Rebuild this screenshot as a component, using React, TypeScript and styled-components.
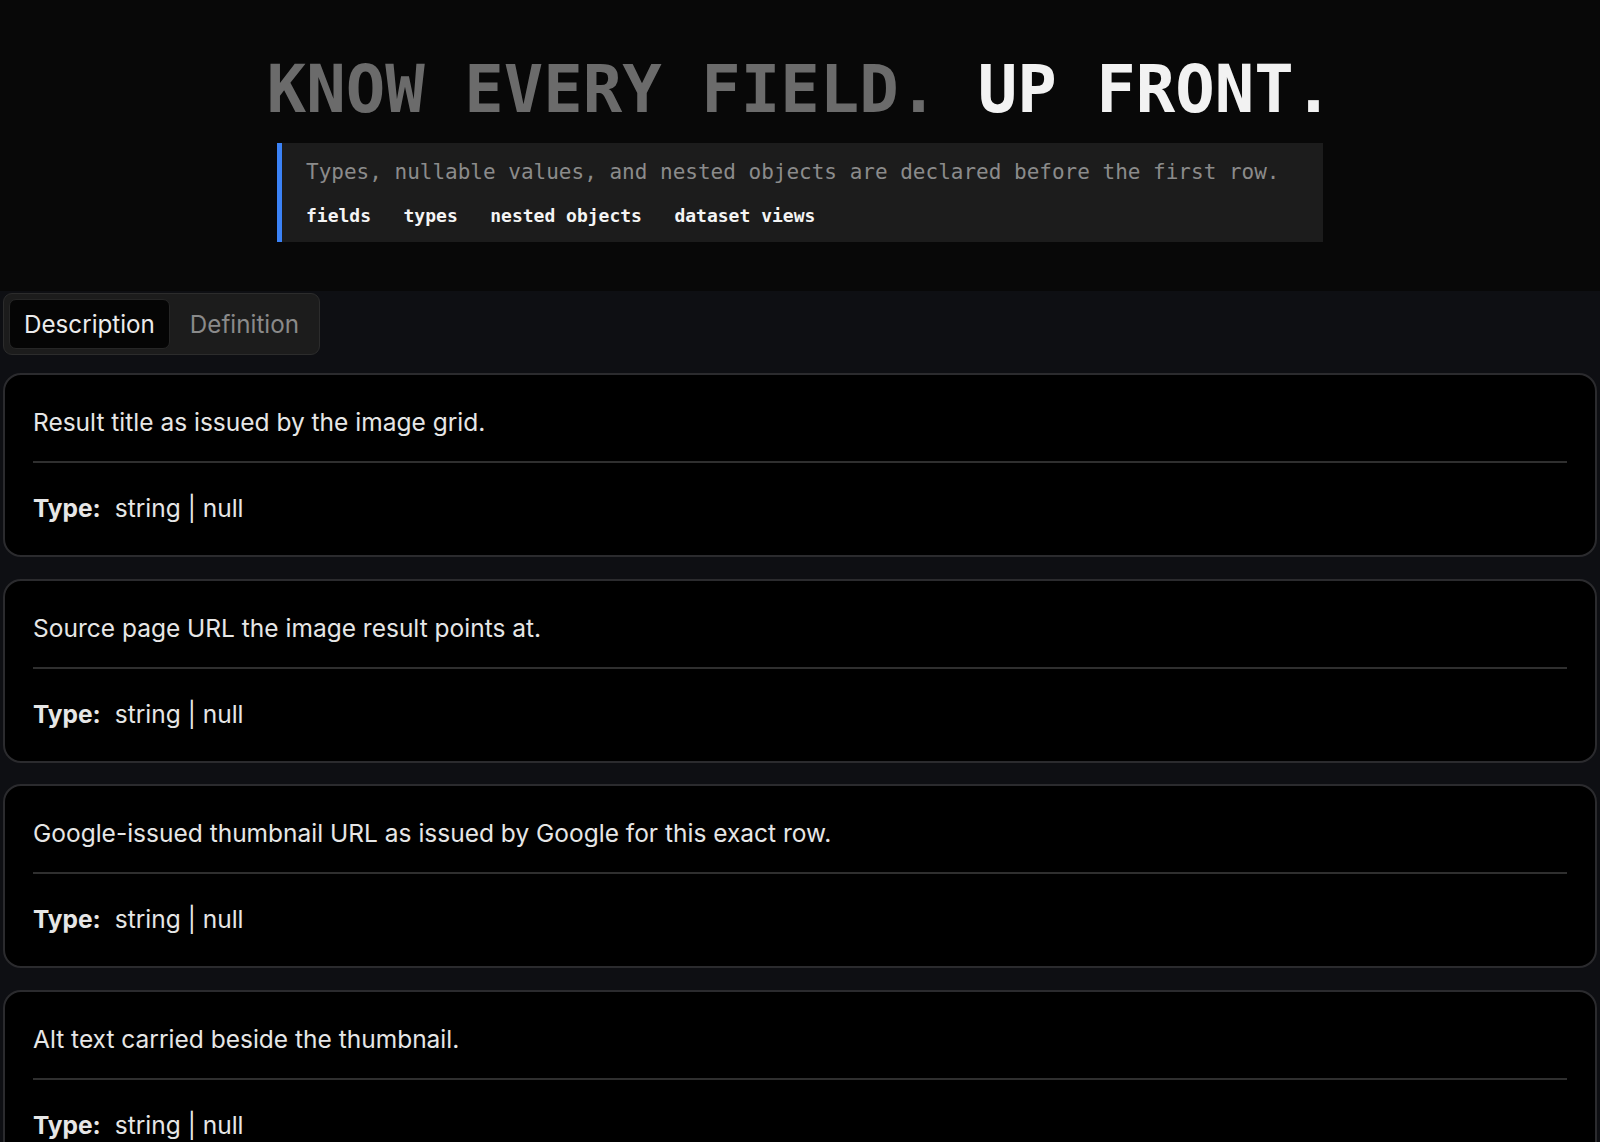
import * as React from "react";
import styled, { createGlobalStyle } from "styled-components";

const GlobalStyle = createGlobalStyle`
  html, body {
    margin: 0;
    padding: 0;
    background: #0e0f13;
  }
  * {
    box-sizing: border-box;
  }
`

const Hero = styled.header`
  background: #080808;
  padding: 54px 0 49px;
  text-align: center;
`

const Title = styled.h1`
  margin: 0;
  font-family: "DejaVu Sans Mono", "Liberation Mono", monospace;
  font-weight: 700;
  font-size: 65.6px;
  line-height: 71px;
  color: #6b6b6b;
  white-space: nowrap;
`

const Bright = styled.span`
  color: #f2f2f2;
`

const Callout = styled.div`
  width: 1046px;
  margin: 18px auto 0;
  padding: 12px 22px 14px 24px;
  background: #1c1c1c;
  border-left: 5px solid #3b82f6;
  text-align: left;
  font-family: "DejaVu Sans Mono", "Liberation Mono", monospace;
`

const Lead = styled.p`
  margin: 0;
  font-size: 21px;
  line-height: 34px;
  color: #8b8b8b;
  white-space: nowrap;
`

const TagRow = styled.div`
  display: flex;
  gap: 32.5px;
  margin-top: 14px;
`

const Tag = styled.span`
  font-size: 18px;
  line-height: 25px;
  font-weight: 700;
  color: #f4f4f4;
`

const Section = styled.main`
  padding: 2px 3px 0;
  font-family: Inter, "Noto Sans", sans-serif;
`

const TabList = styled.div`
  display: inline-flex;
  gap: 5px;
  padding: 5px;
  background: #1c1c1c;
  border: 1px solid #2c2c2c;
  border-radius: 9px;
`

const Tab = styled.button<{ $active?: boolean }>`
  height: 50px;
  padding: 0 14px;
  font-family: inherit;
  font-size: 24.2px;
  color: ${p => (p.$active ? "#ececec" : "#8a8a8a")};
  background: ${p => (p.$active ? "#050505" : "transparent")};
  border: 1px solid ${p => (p.$active ? "#262626" : "transparent")};
  border-radius: 7px;
  cursor: pointer;
`

const CardList = styled.div`
  display: flex;
  flex-direction: column;
  gap: 21.5px;
  margin-top: 18px;
`

const Card = styled.article`
  background: #000;
  border: 2px solid #2b2b2e;
  border-radius: 18px;
  padding: 29px 28px 29px;
  color: #e6e6e6;
  font-size: 24.5px;
  line-height: 36px;
`

const Desc = styled.p`
  margin: 0;
`

const Rule = styled.hr`
  margin: 21px 0 27px;
  border: 0;
  border-top: 2px solid #2f2f2f;
`

const TypeLine = styled.div`
  white-space: nowrap;
`

const TypeLabel = styled.strong`
  font-weight: 700;
  margin-right: 14px;
`

const fields = [
    "Result title as issued by the image grid.",
    "Source page URL the image result points at.",
    "Google-issued thumbnail URL as issued by Google for this exact row.",
    "Alt text carried beside the thumbnail.",
    "Pixel width of the original image.",
]

function App() {
    const [tab, setTab] = React.useState("description")

    return (
        <>
            <GlobalStyle/>
            <Hero>
                <Title>
                    KNOW EVERY FIELD. <Bright>UP FRONT.</Bright>
                </Title>
                <Callout>
                    <Lead>Types, nullable values, and nested objects are declared before the first row.</Lead>
                    <TagRow>
                        <Tag>fields</Tag>
                        <Tag>types</Tag>
                        <Tag>nested objects</Tag>
                        <Tag>dataset views</Tag>
                    </TagRow>
                </Callout>
            </Hero>

            <Section>
                <TabList>
                    <Tab $active={tab === "description"} onClick={() => setTab("description")}>Description</Tab>
                    <Tab $active={tab === "definition"} onClick={() => setTab("definition")}>Definition</Tab>
                </TabList>

                <CardList>
                    {fields.map(text => (
                        <Card key={text}>
                            <Desc>{text}</Desc>
                            <Rule/>
                            <TypeLine>
                                <TypeLabel>Type:</TypeLabel>string | null
                            </TypeLine>
                        </Card>
                    ))}
                </CardList>
            </Section>
        </>
    );
}

export default App;
